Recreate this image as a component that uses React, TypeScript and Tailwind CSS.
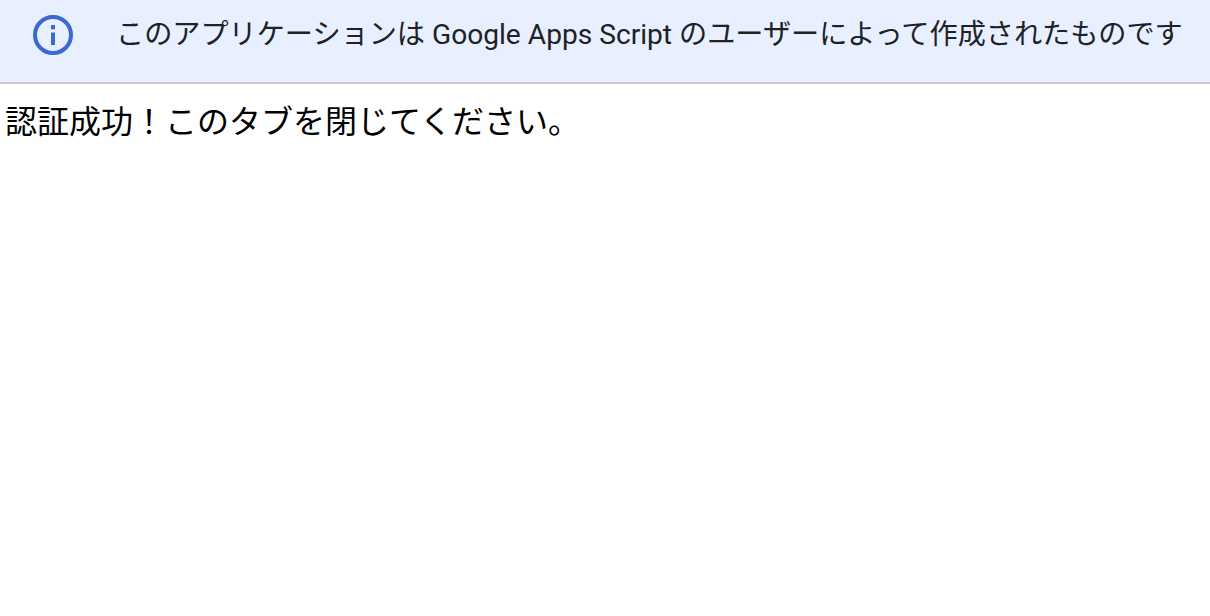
export default function App() {
  return (
    <div className="min-h-[616px] bg-white">
      <div className="flex h-[84px] items-start border-b-2 border-[#cbccd2] bg-[#e8effe]">
        <div className="ml-[33px] mt-[15px] shrink-0">
          <svg width="40" height="40" viewBox="0 0 40 40" fill="none">
            <circle cx="20" cy="20" r="18" stroke="#3c68d2" strokeWidth="4" />
            <rect x="18" y="17.5" width="4" height="12.5" fill="#3c68d2" />
            <rect x="18" y="10" width="4" height="4.3" fill="#3c68d2" />
          </svg>
        </div>
        <p className="ml-[43px] mt-[20px] font-['Roboto','Noto_Sans_CJK_JP',sans-serif] text-[28.15px] leading-[30px] text-[#202124] whitespace-nowrap">
          このアプリケーションは Google Apps Script のユーザーによって作成されたものです
        </p>
      </div>
      <p className="pl-[5px] pt-[22px] font-['Liberation_Sans','Noto_Sans_CJK_JP',sans-serif] text-[32px] leading-none text-black whitespace-nowrap">
        認証成功！このタブを閉じてください。
      </p>
    </div>
  );
}
